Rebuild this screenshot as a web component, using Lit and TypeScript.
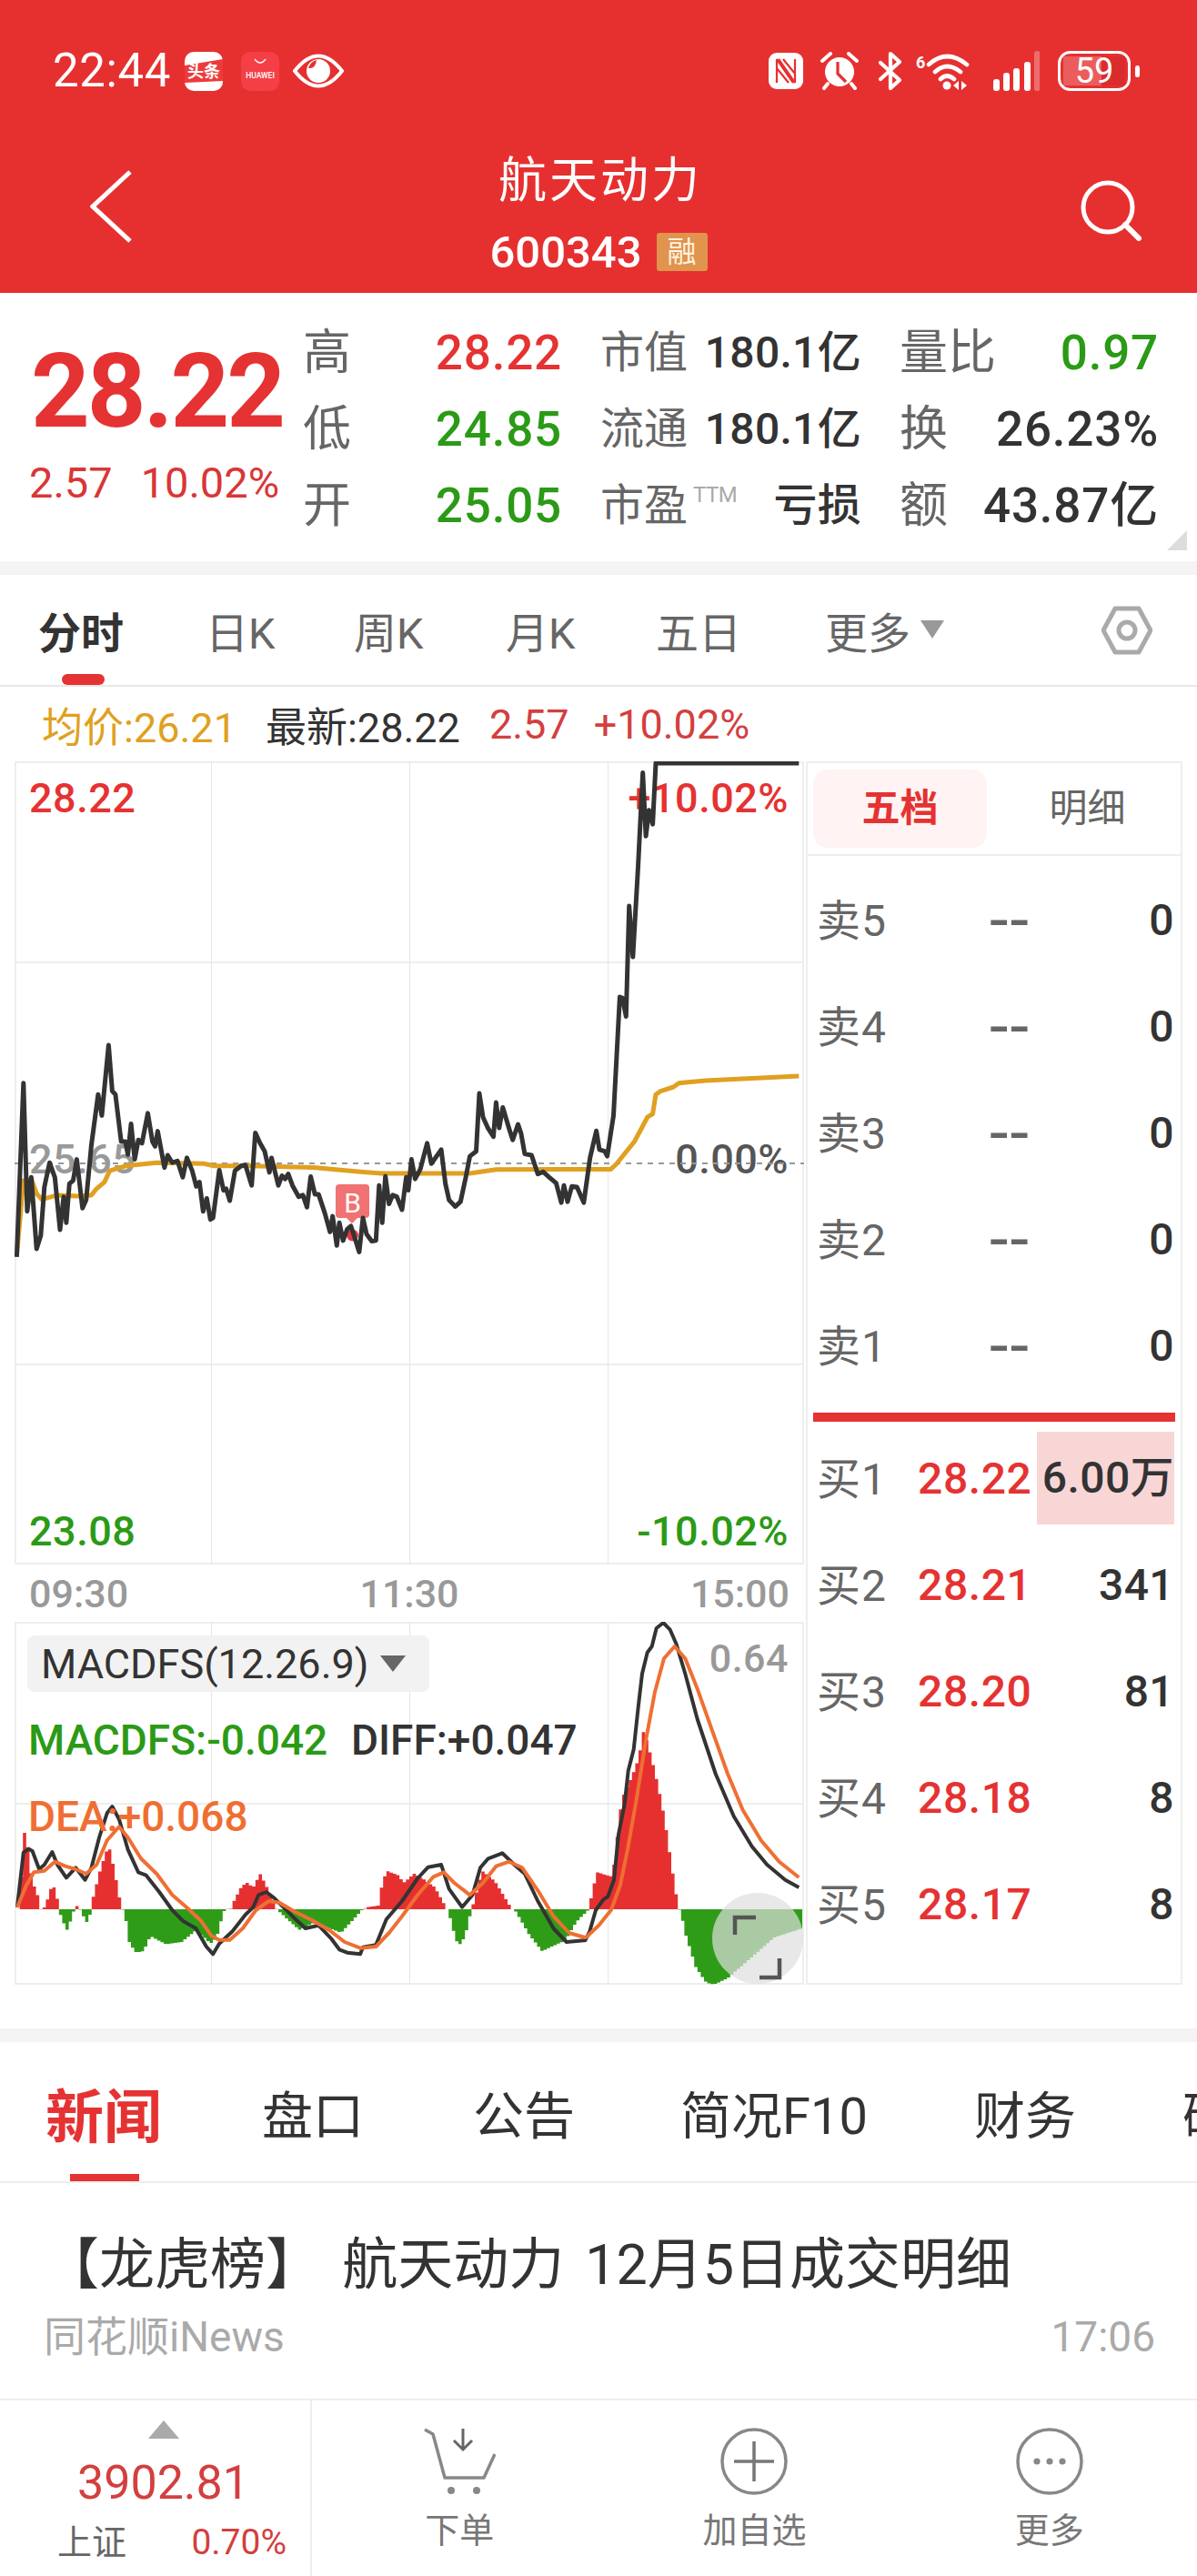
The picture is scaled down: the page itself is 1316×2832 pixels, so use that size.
import { LitElement, html, css } from "lit";
import { customElement } from "lit/decorators.js";

// traced chart data: flat [x, y] lists in the coordinates of the crops they were read from
const PRICE = [32,1545,45,1010,52,1405,60,1300,70,1520,78,1480,85,1330,95,1255,105,1300,115,1462,122,1360,127,1440,133,1320,140,1310,147,1245,158,1395,165,1370,175,1200,188,1045,195,1110,208,893,215,1035,221,1045,232,1190,240,1190,245,1230,251,1135,258,1245,265,1185,272,1195,283,1103,292,1190,297,1205,302,1158,315,1270,321,1232,330,1255,340,1250,350,1300,358,1240,368,1280,376,1328,382,1315,389,1405,396,1365,403,1430,408,1425,420,1278,428,1340,433,1335,440,1372,450,1280,462,1265,470,1262,482,1325,489,1163,498,1195,507,1220,516,1285,520,1240,533,1325,540,1295,546,1305,552,1290,560,1325,572,1360,580,1355,588,1392,595,1298,603,1352,610,1352,622,1410,632,1468,637,1420,645,1510,650,1440,657,1495,665,1460,672,1450,680,1490,688,1530,695,1425,702,1475,712,1497,720,1495,726,1325,732,1440,738,1297,745,1382,752,1355,760,1360,770,1400,778,1300,782,1340,788,1245,795,1305,805,1275,818,1195,826,1258,845,1215,853,1320,860,1370,872,1390,882,1375,892,1300,900,1235,912,1220,918,1042,925,1115,935,1150,945,1175,950,1070,956,1148,963,1085,975,1150,982,1185,992,1137,998,1165,1005,1228,1018,1232,1030,1290,1040,1283,1052,1300,1065,1318,1075,1378,1080,1325,1087,1375,1095,1328,1105,1330,1118,1378,1130,1240,1142,1157,1148,1215,1158,1220,1163,1235,1175,1110,1187,745,1192,748,1199,805,1205,465,1212,622,1222,345,1231,55,1237,250,1243,170,1250,213,1256,25,1530,25];
const AVG = [32,1540,45,1310,60,1305,70,1350,80,1368,110,1355,150,1358,175,1355,185,1335,200,1315,210,1280,240,1265,300,1255,390,1258,410,1265,480,1265,600,1270,690,1283,730,1288,900,1288,950,1276,1080,1275,1170,1275,1180,1260,1215,1190,1240,1115,1250,1105,1256,1045,1265,1035,1290,1022,1300,1010,1350,1002,1530,988];
const HIST = [33,1197,45,920,50,990,58,1100,70,1155,75,1197,78,1203,85,1180,95,1125,103,1125,110,1197,115,1230,127,1270,135,1215,140,1197,145,1185,150,1197,155,1215,165,1245,172,1197,175,1160,190,1060,205,985,215,1060,230,1197,235,1200,245,1310,258,1340,272,1335,285,1285,300,1300,315,1312,345,1305,370,1270,385,1285,400,1310,412,1290,425,1205,430,1197,440,1195,445,1170,460,1120,470,1110,482,1125,495,1080,510,1130,527,1197,535,1210,570,1265,600,1240,650,1275,690,1200,695,1197,700,1190,722,1185,728,1120,737,1070,760,1085,770,1110,790,1080,810,1100,830,1125,853,1197,860,1230,870,1300,880,1315,890,1270,900,1197,905,1170,920,1070,945,1105,975,1190,978,1197,985,1205,1010,1280,1035,1335,1060,1315,1080,1300,1100,1240,1125,1197,1130,1150,1140,1075,1160,1085,1170,1090,1185,870,1190,825,1207,760,1220,700,1230,605,1245,700,1258,795,1270,900,1282,1040,1293,1160,1297,1197,1300,1200,1310,1280,1330,1390,1350,1440,1365,1445,1390,1425,1440,1350,1480,1290,1533,1260];
const DIFF_A = [33,1190,45,1010,55,998,62,1005,75,1065,85,1050,100,1008,110,1050,127,1093,145,1060,163,1100,175,1060,190,960,205,880,215,858,228,900,245,1000,265,1075,280,1085,305,1140,330,1200,350,1235,375,1260,395,1320,408,1345,420,1310,445,1270,470,1215,485,1190,495,1150,510,1140,525,1160,560,1220,585,1260,610,1250,635,1295,650,1330,665,1340,690,1345,695,1322,720,1315,740,1230,770,1170,800,1095,820,1058,845,1050,860,1130,885,1190,905,1150,920,1060,935,1030,962,1012,985,1050,1005,1080,1030,1170,1060,1260,1085,1305,1118,1300];
const DIFF_B = [130,1120,145,1090,165,1020,190,985,205,975,225,920,240,770,260,670,272,560,290,490,305,350,318,240,335,170,350,150,365,90,388,72,410,95,430,140,460,240,500,390,560,570,620,710,680,810,730,870,790,920,835,945];
const DEA_A = [33,1190,50,1120,65,1075,85,1070,105,1040,125,1055,145,1065,165,1080,185,1050,205,970,228,925,245,960,270,1030,300,1080,330,1150,360,1195,385,1235,405,1285,420,1298,440,1298,465,1260,490,1200,515,1170,535,1175,565,1205,600,1235,630,1265,660,1305,690,1325,720,1320,745,1275,770,1220,800,1150,830,1090,850,1075,870,1110,900,1150,925,1110,950,1055,975,1040,1000,1060,1030,1135,1060,1220,1090,1275,1120,1290];
const DEA_B = [135,1108,175,1070,215,1020,245,940,270,820,300,650,330,460,360,300,390,190,425,150,460,190,500,290,550,430,600,570,650,690,710,790,770,860,835,912];

const CHART_LEFT = 16, CHART_TOP = 837, MACD_TOP = 1783;
const map = (a: number[], fx: (x: number) => number, fy: (y: number) => number) => {
  const out: string[] = [];
  for (let i = 0; i < a.length; i += 2) out.push(`${fx(a[i]).toFixed(1)},${fy(a[i + 1]).toFixed(1)}`);
  return out.join(" ");
};
const z3x = (x: number) => x / 1.742 - CHART_LEFT;
const z3y = (y: number) => 830 + y / 2.8 - CHART_TOP;
const z4x = z3x;
const z4y = (y: number) => 1700 + y / 3 - MACD_TOP;
const z9x = (x: number) => 600 + x / 3 - CHART_LEFT;
const z9y = (y: number) => 1760 + y / 3 - MACD_TOP;

function histPaths() {
  let red = "", green = "";
  const y0 = z4y(1197);
  const w = 3.6;
  for (let i = 0; i < 241; i++) {
    const rx = 18 + i * w;
    const zx = rx * 1.742;
    let v = 1197;
    for (let k = 0; k + 2 < HIST.length; k += 2) {
      if (zx >= HIST[k] && zx <= HIST[k + 2]) {
        const t = (zx - HIST[k]) / (HIST[k + 2] - HIST[k]);
        v = HIST[k + 1] + t * (HIST[k + 3] - HIST[k + 1]);
        break;
      }
    }
    const x = rx - CHART_LEFT;
    const d = `M${x.toFixed(1)} ${y0.toFixed(1)}V${z4y(v).toFixed(1)}H${(x + w).toFixed(1)}V${y0.toFixed(1)}Z`;
    if (v < 1197) red += d; else if (v > 1197) green += d;
  }
  return { red, green };
}

const SELL = ["5", "4", "3", "2", "1"];
const BUY = [
  ["1", "28.22", "6.00万"],
  ["2", "28.21", "341"],
  ["3", "28.20", "81"],
  ["4", "28.18", "8"],
  ["5", "28.17", "8"],
];

@customElement("app-root")
export class AppRoot extends LitElement {
  static styles = css`
    :host {
      display: flex; flex-direction: column; width: 1316px; height: 2832px; overflow: hidden;
      background: #fff; color: #333;
      font-family: Roboto, "Noto Sans CJK SC", sans-serif;
    }
    svg { display: block; flex: none; }
    .red { color: #e53232; } .green { color: #2b9a16; } .dark { color: #333; } .gray { color: #666; }

    .header { height: 322px; flex: none; background: #e63030; color: #fff; display: flex; flex-direction: column; }
    .status { height: 44px; margin-top: 56px; display: flex; align-items: center; padding: 0 63px 0 58px; }
    .time { font-size: 51px; line-height: 46px; letter-spacing: .6px; width: 145px; }
    .ico-l { margin-right: 20px; }
    .spacer { flex: 1; }
    .ico-r { margin-left: 18px; }
    .nav { flex: 1; display: grid; grid-template-columns: 1fr auto 1fr; padding: 0 61px 0 99px; }
    .back { margin-top: 87px; }
    .search { margin-top: 97px; justify-self: end; }
    .titles { display: flex; flex-direction: column; align-items: center; padding-top: 72px; margin-right: 44px; }
    .title { font-size: 53px; line-height: 54px; letter-spacing: 3px; margin-left: 10px; }
    .code { display: flex; align-items: center; height: 54px; margin-top: 24px; margin-left: 6px; font-size: 49px; font-weight: 500; }
    .badge { width: 56px; height: 42px; margin-left: 16px; background: #e0944e; border-radius: 3px; font-size: 32px; font-weight: 400; line-height: 42px; text-align: center; color: #fff3e0; }

    .quote { height: 295px; flex: none; display: flex; position: relative; padding-top: 24px; box-sizing: border-box; }
    .left { width: 333px; flex: none; display: flex; flex-direction: column; }
    .big { font-size: 113px; line-height: 120px; font-weight: 700; letter-spacing: -3px; color: #e53232; padding: 25px 0 0 34px; }
    .sub { display: flex; font-size: 47px; line-height: 50px; margin-top: 15px; padding-left: 32px; color: #d93636; }
    .sub span:last-child { margin-left: 31px; }
    .stats { display: grid; grid-template-columns: 285px 287px 285px; grid-auto-rows: 84px; column-gap: 42px; align-items: center; }
    .stat { display: flex; justify-content: space-between; align-items: center; }
    .k { font-size: 53px; line-height: 60px; color: #666; }
    .k.m { font-size: 48px; }
    .v { font-size: 53px; line-height: 60px; font-weight: 500; letter-spacing: .8px; }
    .v.m { font-size: 48px; letter-spacing: .3px; }
    .ttm { font-size: 24px; line-height: 22px; vertical-align: 20px; color: #aaa; margin-left: 6px; letter-spacing: -.5px; }
    .corner { position: absolute; right: 11px; top: 261px; width: 0; height: 0; border-left: 22px solid transparent; border-bottom: 22px solid #ddd; }

    .gap { height: 15px; flex: none; background: #f4f4f4; }

    .ktabs { height: 123px; flex: none; box-sizing: border-box; border-bottom: 2px solid #e8e8e8; position: relative; display: grid; grid-template-columns: 184px 163px 167px 165px 186px 105px 199px 55px; padding-left: 42px; align-items: center; font-size: 47px; color: #666; }
    .ktabs .on { font-weight: 700; color: #333; }
    .kind { position: absolute; left: 68px; bottom: 0; width: 47px; height: 12px; border-radius: 6px; background: #e53232; }
    .tri { width: 0; height: 0; border-left: 13px solid transparent; border-right: 13px solid transparent; border-top: 20px solid #999; margin-top: -2px; }

    .legend { height: 82px; flex: none; display: flex; align-items: center; padding-left: 46px; font-size: 45px; }
    .legend span { margin-right: 32px; white-space: nowrap; }
    .legend span:nth-child(3) { margin-right: 27px; }
    .gold { color: #e0a020; }
    .lred { color: #d33f3f; }

    .main { height: 1345px; flex: none; display: flex; padding-left: 16px; }
    .col { width: 868px; flex: none; display: flex; flex-direction: column; }
    .chart { height: 883px; flex: none; position: relative; }
    .chart > svg, .macd > svg { position: absolute; left: 0; top: 0; }
    .lb { position: absolute; font-size: 45px; line-height: 44px; white-space: nowrap; font-weight: 500; letter-spacing: .5px; }
    .lb.w { font-size: 46px; letter-spacing: 0; }
    .lb.s { font-size: 43px; }
    .axis { height: 63px; flex: none; display: grid; grid-template-columns: 1fr 1fr 1fr; align-items: center; padding: 0 16px; font-size: 43px; font-weight: 500; color: #999; }
    .axis span:nth-child(2) { text-align: center; }
    .axis span:nth-child(3) { text-align: right; }
    .macd { height: 399px; flex: none; position: relative; }
    .sel { position: absolute; left: 14px; top: 15px; width: 442px; height: 62px; box-sizing: border-box; padding-left: 15px; background: #f2f2f2; border-radius: 8px; display: flex; align-items: center; font-size: 45px; color: #333; z-index: 2; }
    .sel i { display: block; margin-left: 13px; width: 0; height: 0; border-left: 14px solid transparent; border-right: 14px solid transparent; border-top: 18px solid #666; }

    .panel { width: 414px; flex: none; box-sizing: border-box; border: 2px solid #eee; margin-left: 2px; display: flex; flex-direction: column; }
    .ptabs { height: 100px; flex: none; border-bottom: 2px solid #eee; display: flex; box-sizing: content-box; align-items: center; padding: 0 6px; font-size: 42px; }
    .pt { width: 191px; height: 86px; line-height: 86px; text-align: center; border-radius: 16px; color: #666; }
    .pt.on { background: #fff4f3; color: #e53232; font-weight: 700; }
    .pt + .pt { flex: 1; padding-left: 14px; }
    .rows { margin-top: 12px; }
    .row { height: 117px; display: grid; grid-template-columns: 111px 124px 158px; padding-left: 10px; align-items: center; font-size: 48px; font-weight: 500; }
    .row .n { color: #666; font-weight: 400; white-space: nowrap; letter-spacing: 1px; padding-bottom: 8px; }
    .row .p { text-align: right; letter-spacing: .6px; }
    .row .p.gray { font-size: 74px; line-height: 60px; font-weight: 400; letter-spacing: 2px; padding-right: 0; }
    .row .q { text-align: right; margin-left: 7px; height: 102px; line-height: 102px; white-space: nowrap; letter-spacing: .4px; }
    .row .q.hl { background: #f9d6d6; margin-top: -2px; }
    .redline { height: 10px; flex: none; background: #e53232; margin: 15px 6px 4px 6px; }

    .blank { height: 48px; flex: none; }

    .ntabs { height: 155px; flex: none; box-sizing: border-box; border-bottom: 2px solid #eee; position: relative; display: grid; grid-template-columns: 238px 232px 228px 323px 229px 60px; padding-left: 50px; align-items: center; font-size: 56px; color: #333; overflow: hidden; white-space: nowrap; }
    .ntabs .on { font-size: 64px; font-weight: 700; color: #e53232; }
    .nind { position: absolute; left: 77px; bottom: 0; width: 76px; height: 8px; background: #e53232; }

    .news { height: 237px; flex: none; box-sizing: border-box; padding: 57px 46px 0 48px; }
    .ntitle { font-size: 61px; line-height: 66px; color: #333; white-space: nowrap; word-spacing: 8px; }
    .nmeta { display: flex; justify-content: space-between; margin-top: 21px; font-size: 46px; line-height: 50px; color: #aaa; }

    .bar { flex: 1; border-top: 2px solid #eee; display: flex; }
    .idx { width: 343px; flex: none; box-sizing: border-box; border-right: 2px solid #eee; display: flex; flex-direction: column; align-items: center; padding-top: 22px; padding-left: 18px; }
    .up { width: 0; height: 0; border-left: 17px solid transparent; border-right: 17px solid transparent; border-bottom: 20px solid #aaa; }
    .idxv { font-size: 52px; line-height: 56px; color: #d33f3f; margin-top: 21px; }
    .idxr { align-self: stretch; display: flex; justify-content: space-between; margin: 12px 0 0 -18px; padding: 0 26px 0 63px; align-items: center; height: 50px; }
    .idxr .a { font-size: 38px; color: #666; padding-bottom: 8px; }
    .idxr .b { font-size: 39px; color: #d33f3f; }
    .act { flex: 1; display: flex; flex-direction: column; align-items: center; padding-top: 29px; color: #777; font-size: 38px; line-height: 44px; }
    .act span { margin-top: 16px; }
  `;

  private statusLeft() {
    return html`
      <svg class="ico-l" width="42" height="43" viewBox="0 0 42 43">
        <rect width="42" height="43" rx="10" fill="#fff"/>
        <path d="M0 15L42 8V32L0 34Z" fill="#ee3a3a"/>
        <text x="21" y="28" text-anchor="middle" font-size="18" font-weight="700" fill="#fff" font-family="Noto Sans CJK SC">头条</text>
      </svg>
      <svg class="ico-l" width="42" height="43" viewBox="0 0 42 43" style="margin-right:15px">
        <rect width="42" height="43" rx="10" fill="#f43f47"/>
        <path d="M15 8Q21 16 27 8" fill="none" stroke="#fff" stroke-width="1.3"/>
        <text x="21" y="29" text-anchor="middle" font-size="8.5" font-weight="500" fill="#fff" font-family="Roboto">HUAWEI</text>
      </svg>
      <svg width="56" height="38" viewBox="0 0 56 38">
        <path d="M2 19Q28 -14 54 19Q28 52 2 19Z" fill="none" stroke="#fff" stroke-width="4"/>
        <circle cx="28" cy="19" r="13" fill="#fff"/>
        <path d="M26 7Q25 17 17 16Q19 9 26 7Z" fill="#e63030"/>
      </svg>
    `;
  }

  private statusRight() {
    return html`
      <svg width="38" height="40" viewBox="0 0 38 40">
        <rect width="38" height="40" rx="9" fill="#fff"/>
        <path d="M9 7V33M29 7V33M9 7L27 33M9 17L22 33M29 33L11 7M29 23L16 7" fill="none" stroke="#e63030" stroke-width="2.2"/>
      </svg>
      <svg class="ico-r" width="44" height="42" viewBox="0 0 44 42">
        <circle cx="22" cy="22" r="16" fill="#fff"/>
        <path d="M3 10L12 2M41 10L32 2M9 35L5 40M35 35L39 40" stroke="#fff" stroke-width="4" stroke-linecap="round"/>
        <path d="M20 11V24L29 33" fill="none" stroke="#e63030" stroke-width="3.2"/>
      </svg>
      <svg style="margin-left:20px" width="27" height="44" viewBox="0 0 27 44">
        <path d="M3 13L24 32L14 41V3L24 12L3 31" fill="none" stroke="#fff" stroke-width="4.2" stroke-linejoin="round" stroke-linecap="round"/>
      </svg>
      <svg style="margin-left:15px" width="60" height="44" viewBox="0 0 60 44">
        <text x="0" y="19" font-size="18" font-weight="700" fill="#fff" font-family="Roboto">6</text>
        <path d="M14 15Q34 -3 56 15M21 23Q34 11 49 23M27 31Q34 24 42 31" fill="none" stroke="#fff" stroke-width="4.6" stroke-linecap="round"/>
        <circle cx="34" cy="38" r="4.5" fill="#fff"/>
        <path d="M41 38L47 33V43ZM50 33L56 38L50 43Z" fill="#fff"/>
      </svg>
      <svg style="margin-left:25px" width="51" height="44" viewBox="0 0 51 44">
        <rect x="0" y="31" width="7" height="13" rx="3" fill="#fff"/>
        <rect x="11" y="24" width="7" height="20" rx="3" fill="#fff"/>
        <rect x="22" y="19" width="7" height="25" rx="3" fill="#fff"/>
        <rect x="34" y="12" width="7" height="32" rx="3" fill="#fff"/>
        <rect x="45" y="0" width="6.5" height="44" rx="3" fill="#fff" opacity=".3"/>
      </svg>
      <svg style="margin-left:20px" width="90" height="44" viewBox="0 0 90 44">
        <rect x="1.5" y="1.5" width="77" height="41" rx="12" fill="none" stroke="#fff" stroke-width="3"/>
        <path d="M6 6H48V38H6Z" fill="#fff" opacity=".22"/>
        <path d="M48 6H74V38H48Z" fill="#b82020" opacity=".25"/>
        <text x="40" y="35" text-anchor="middle" font-size="38" fill="#fff" font-family="Roboto">59</text>
        <rect x="85" y="16" width="5" height="13" rx="2.5" fill="#fff"/>
      </svg>
    `;
  }

  private priceChart() {
    const w = 868, h = 883;
    return html`
      <svg width=${w} height=${h} viewBox="0 0 ${w} ${h}">
        <g stroke="#eee" stroke-width="2" fill="none">
          <rect x="1" y="1" width=${w - 2} height=${h - 2}/>
          <path d="M0 221H${w}M0 663H${w}"/>
        </g>
        <path d="M216.5 0V${h}M434.5 0V${h}M652.5 0V${h}" stroke="#e6e6e6" stroke-width="1" fill="none"/>
        <path d="M0 442H${w}" stroke="#999" stroke-width="2" stroke-dasharray="6 6" fill="none"/>
        <path d="M357 465h29a4 4 0 0 1 4 4v29a4 4 0 0 1 -4 4h-9l-6 6l-6 -6h-8a4 4 0 0 1 -4 -4v-29a4 4 0 0 1 4 -4z" fill="#f07272"/>
        <text x="371.5" y="496" text-anchor="middle" font-size="30" fill="#fff" font-family="Roboto">B</text>
        <circle cx="371.5" cy="521" r="6.5" fill="#e63946"/>
        <polyline points=${map(AVG, z3x, z3y)} fill="none" stroke="#e0a020" stroke-width="5" stroke-linejoin="round"/>
        <polyline points=${map(PRICE, z3x, z3y)} fill="none" stroke="#333" stroke-width="5" stroke-linejoin="round"/>
      </svg>`;
  }

  private macdChart() {
    const w = 868, h = 399;
    const { red, green } = histPaths();
    const diff = map(DIFF_A, z4x, z4y) + " " + map(DIFF_B, z9x, z9y);
    const dea = map(DEA_A, z4x, z4y) + " " + map(DEA_B, z9x, z9y);
    return html`
      <svg width=${w} height=${h} viewBox="0 0 ${w} ${h}">
        <g stroke="#eee" stroke-width="2" fill="none">
          <rect x="1" y="1" width=${w - 2} height=${h - 2}/>
          <path d="M0 200H${w}"/>
        </g>
        <path d="M216.5 0V${h}M434.5 0V${h}M652.5 0V${h}" stroke="#e6e6e6" stroke-width="1" fill="none"/>
        <path d=${red} fill="#e63030"/>
        <path d=${green} fill="#2f9c18"/>
        <polyline points=${diff} fill="none" stroke="#333" stroke-width="4" stroke-linejoin="round"/>
        <polyline points=${dea} fill="none" stroke="#ef6f33" stroke-width="4" stroke-linejoin="round"/>
        <circle cx="817" cy="348" r="50" fill="rgba(222,222,222,.7)"/>
        <path d="M792 344V325H815M819 391H841V370" fill="none" stroke="#555" stroke-width="4.5"/>
      </svg>`;
  }

  render() {
    return html`
      <div class="header">
        <div class="status">
          <div class="time">22:44</div>
          ${this.statusLeft()}
          <div class="spacer"></div>
          ${this.statusRight()}
        </div>
        <div class="nav">
          <svg class="back" width="46" height="80" viewBox="0 0 46 80">
            <path d="M44 2L3 40L44 78" fill="none" stroke="#fff" stroke-width="5"/>
          </svg>
          <div class="titles">
            <div class="title">航天动力</div>
            <div class="code">600343<span class="badge">融</span></div>
          </div>
          <svg class="search" width="68" height="68" viewBox="0 0 68 68">
            <circle cx="31" cy="31" r="27" fill="none" stroke="#fff" stroke-width="5"/>
            <path d="M50 50L65 65" stroke="#fff" stroke-width="6" stroke-linecap="round"/>
          </svg>
        </div>
      </div>

      <div class="quote">
        <div class="left">
          <div class="big">28.22</div>
          <div class="sub"><span>2.57</span><span>10.02%</span></div>
        </div>
        <div class="stats">
          <div class="stat"><span class="k">高</span><span class="v red">28.22</span></div>
          <div class="stat"><span class="k m">市值</span><span class="v m">180.1亿</span></div>
          <div class="stat"><span class="k">量比</span><span class="v green">0.97</span></div>
          <div class="stat"><span class="k">低</span><span class="v green">24.85</span></div>
          <div class="stat"><span class="k m">流通</span><span class="v m">180.1亿</span></div>
          <div class="stat"><span class="k">换</span><span class="v">26.23%</span></div>
          <div class="stat"><span class="k">开</span><span class="v green">25.05</span></div>
          <div class="stat"><span class="k m">市盈<span class="ttm">TTM</span></span><span class="v m">亏损</span></div>
          <div class="stat"><span class="k">额</span><span class="v">43.87亿</span></div>
        </div>
        <div class="corner"></div>
      </div>
      <div class="gap"></div>

      <div class="ktabs">
        <span class="on">分时</span><span>日K</span><span>周K</span><span>月K</span><span>五日</span><span>更多</span>
        <span class="tri"></span>
        <svg width="56" height="54" viewBox="0 0 56 54">
          <path d="M15 3H41L54 27L41 51H15L2 27Z" fill="none" stroke="#aaa" stroke-width="5" stroke-linejoin="round"/>
          <circle cx="28" cy="27" r="9" fill="none" stroke="#aaa" stroke-width="5"/>
        </svg>
        <div class="kind"></div>
      </div>

      <div class="legend">
        <span class="gold">均价:26.21</span><span>最新:28.22</span><span class="lred">2.57</span><span class="lred">+10.02%</span>
      </div>

      <div class="main">
        <div class="col">
          <div class="chart">
            <div class="lb red" style="left:16px;top:19px">28.22</div>
            <div class="lb red" style="right:17px;top:19px">+10.02%</div>
            <div class="lb" style="left:16px;top:416px;color:#999">25.65</div>
            <div class="lb" style="right:17px;top:416px;color:#555">0.00%</div>
            <div class="lb green" style="left:16px;top:825px">23.08</div>
            <div class="lb green" style="right:17px;top:825px">-10.02%</div>
            ${this.priceChart()}
          </div>
          <div class="axis"><span>09:30</span><span>11:30</span><span>15:00</span></div>
          <div class="macd">
            ${this.macdChart()}
            <div class="sel">MACDFS(12.26.9)<i></i></div>
            <div class="lb s" style="right:17px;top:18px;color:#999">0.64</div>
            <div class="lb w green" style="left:15px;top:108px">MACDFS:-0.042</div>
            <div class="lb w dark" style="left:370px;top:108px">DIFF:+0.047</div>
            <div class="lb w" style="left:15px;top:192px;color:#ef6f33">DEA:+0.068</div>
          </div>
        </div>
        <div class="panel">
          <div class="ptabs"><div class="pt on">五档</div><div class="pt">明细</div></div>
          <div class="rows">
            ${SELL.map(n => html`<div class="row"><span class="n">卖${n}</span><span class="p gray">--</span><span class="q">0</span></div>`)}
          </div>
          <div class="redline"></div>
          ${BUY.map((r, i) => html`<div class="row"><span class="n">买${r[0]}</span><span class="p red">${r[1]}</span><span class="q ${i === 0 ? "hl" : ""}">${r[2]}</span></div>`)}
        </div>
      </div>

      <div class="blank"></div>
      <div class="gap"></div>

      <div class="ntabs">
        <span class="on">新闻</span><span>盘口</span><span>公告</span><span>简况F10</span><span>财务</span><span>研报</span>
        <div class="nind"></div>
      </div>

      <div class="news">
        <div class="ntitle">【龙虎榜】 航天动力 12月5日成交明细</div>
        <div class="nmeta"><span>同花顺iNews</span><span>17:06</span></div>
      </div>

      <div class="bar">
        <div class="idx">
          <div class="up"></div>
          <div class="idxv">3902.81</div>
          <div class="idxr"><span class="a">上证</span><span class="b">0.70%</span></div>
        </div>
        <div class="act">
          <svg width="80" height="76" viewBox="0 0 80 76">
            <path d="M2 3L11 8L24 56H67L79 30" fill="none" stroke="#888" stroke-width="3.5" stroke-linejoin="round"/>
            <path d="M44 2V25M34 15L44 25L54 15" fill="none" stroke="#666" stroke-width="3"/>
            <circle cx="31" cy="70" r="4" fill="#888"/><circle cx="59" cy="70" r="4" fill="#888"/>
          </svg>
          <span>下单</span>
        </div>
        <div class="act">
          <svg width="76" height="76" viewBox="0 0 76 76">
            <circle cx="38" cy="38" r="35" fill="none" stroke="#888" stroke-width="3.5"/>
            <path d="M16 38H60M38 16V60" stroke="#777" stroke-width="3.5"/>
          </svg>
          <span>加自选</span>
        </div>
        <div class="act">
          <svg width="76" height="76" viewBox="0 0 76 76">
            <circle cx="38" cy="38" r="35" fill="none" stroke="#888" stroke-width="3.5"/>
            <circle cx="24" cy="38" r="3.6" fill="#888"/><circle cx="38" cy="38" r="3.6" fill="#888"/><circle cx="52" cy="38" r="3.6" fill="#888"/>
          </svg>
          <span>更多</span>
        </div>
      </div>
    `;
  }
}
